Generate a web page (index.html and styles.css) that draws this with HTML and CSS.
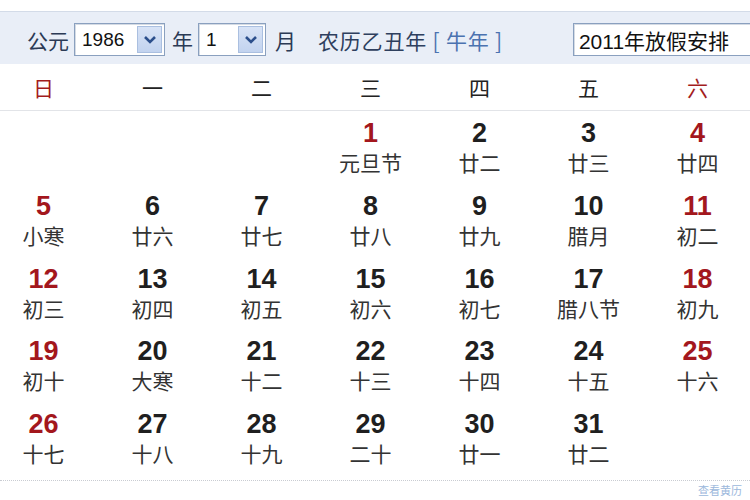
FILE: index.html
```html
<!DOCTYPE html>
<html lang="zh-CN">
<head>
<meta charset="utf-8">
<title>万年历 1986年1月</title>
<link rel="stylesheet" href="styles.css">
</head>
<body>
<div class="page">
  <div class="topbar">
    <span class="lbl">公元</span>
    <div class="sel sel-year">
      <span class="val">1986</span>
      <span class="btn"><svg width="14" height="10" viewBox="0 0 14 10"><path d="M2 2 L7 7 L12 2" fill="none" stroke="#2c4f8c" stroke-width="2.6"/></svg></span>
    </div>
    <span class="lbl lbl-y">年</span>
    <div class="sel sel-month">
      <span class="val">1</span>
      <span class="btn"><svg width="14" height="10" viewBox="0 0 14 10"><path d="M2 2 L7 7 L12 2" fill="none" stroke="#2c4f8c" stroke-width="2.6"/></svg></span>
    </div>
    <span class="lbl lbl-m">月</span>
    <span class="lunar">农历乙丑年 <span class="zodiac">[ 牛年 ]</span></span>
    <div class="sel sel-holiday"><span class="val">2011年放假安排</span></div>
  </div>

  <div class="weekdays">
    <div class="wd red">日</div>
    <div class="wd">一</div>
    <div class="wd">二</div>
    <div class="wd">三</div>
    <div class="wd">四</div>
    <div class="wd">五</div>
    <div class="wd red">六</div>
  </div>

  <div class="grid">
    <div class="cell"></div>
    <div class="cell"></div>
    <div class="cell"></div>
    <div class="cell red"><div class="num">1</div><div class="lu">元旦节</div></div>
    <div class="cell"><div class="num">2</div><div class="lu">廿二</div></div>
    <div class="cell"><div class="num">3</div><div class="lu">廿三</div></div>
    <div class="cell red"><div class="num">4</div><div class="lu">廿四</div></div>

    <div class="cell red"><div class="num">5</div><div class="lu">小寒</div></div>
    <div class="cell"><div class="num">6</div><div class="lu">廿六</div></div>
    <div class="cell"><div class="num">7</div><div class="lu">廿七</div></div>
    <div class="cell"><div class="num">8</div><div class="lu">廿八</div></div>
    <div class="cell"><div class="num">9</div><div class="lu">廿九</div></div>
    <div class="cell"><div class="num">10</div><div class="lu">腊月</div></div>
    <div class="cell red"><div class="num">11</div><div class="lu">初二</div></div>

    <div class="cell red"><div class="num">12</div><div class="lu">初三</div></div>
    <div class="cell"><div class="num">13</div><div class="lu">初四</div></div>
    <div class="cell"><div class="num">14</div><div class="lu">初五</div></div>
    <div class="cell"><div class="num">15</div><div class="lu">初六</div></div>
    <div class="cell"><div class="num">16</div><div class="lu">初七</div></div>
    <div class="cell"><div class="num">17</div><div class="lu">腊八节</div></div>
    <div class="cell red"><div class="num">18</div><div class="lu">初九</div></div>

    <div class="cell red"><div class="num">19</div><div class="lu">初十</div></div>
    <div class="cell"><div class="num">20</div><div class="lu">大寒</div></div>
    <div class="cell"><div class="num">21</div><div class="lu">十二</div></div>
    <div class="cell"><div class="num">22</div><div class="lu">十三</div></div>
    <div class="cell"><div class="num">23</div><div class="lu">十四</div></div>
    <div class="cell"><div class="num">24</div><div class="lu">十五</div></div>
    <div class="cell red"><div class="num">25</div><div class="lu">十六</div></div>

    <div class="cell red"><div class="num">26</div><div class="lu">十七</div></div>
    <div class="cell"><div class="num">27</div><div class="lu">十八</div></div>
    <div class="cell"><div class="num">28</div><div class="lu">十九</div></div>
    <div class="cell"><div class="num">29</div><div class="lu">二十</div></div>
    <div class="cell"><div class="num">30</div><div class="lu">廿一</div></div>
    <div class="cell"><div class="num">31</div><div class="lu">廿二</div></div>
    <div class="cell"></div>
  </div>

  <div class="footer">
    <span class="more">查看黄历</span>
  </div>
</div>
</body>
</html>
```

FILE: styles.css
```css
html, body {
  margin: 0;
  padding: 0;
  background: #ffffff;
  overflow: hidden;
}

.page {
  width: 750px;
  height: 500px;
  overflow: hidden;
  font-family: "Noto Sans CJK SC", "Liberation Sans", sans-serif;
  color: #333;
}

.topbar {
  box-sizing: border-box;
  margin-top: 11px;
  height: 53px;
  padding-top: 3px;
  border-top: 1px solid #d3dbe8;
  background: #e9eef7;
  display: flex;
  align-items: center;
  padding-left: 27px;
  white-space: nowrap;
  overflow: hidden;
}

.topbar > * {
  flex-shrink: 0;
}

.lbl {
  font-size: 21px;
  line-height: 24px;
  color: #2b3a55;
}

.lbl-y { margin-left: 7px; }
.lbl-m { margin-left: 9px; }

.sel {
  box-sizing: border-box;
  height: 33px;
  border: 1px solid #8aa0bf;
  background: #ffffff;
  display: flex;
  align-items: center;
  padding: 0 2px 0 7px;
  box-shadow: inset 1px 1px 0 #d5dbe4;
}

.sel .val {
  flex: 1;
  font-family: "Liberation Sans", "Noto Sans CJK SC", sans-serif;
  font-size: 19px;
  color: #111;
}

.sel .btn {
  width: 25px;
  height: 27px;
  box-sizing: border-box;
  border: 1px solid #aabfe0;
  background: linear-gradient(#d8e3f6, #c2d3ef);
  display: flex;
  align-items: center;
  justify-content: center;
}

.sel-year {
  width: 91px;
  margin-left: 5px;
}

.sel-month {
  width: 68px;
  margin-left: 5px;
}

.lunar {
  margin-left: 22px;
  font-size: 21px;
  letter-spacing: 0.8px;
  color: #2e3f5e;
}

.zodiac {
  color: #4b72b0;
}

.sel-holiday {
  margin-left: 70px;
  width: 190px;
  padding-left: 5px;
}

.sel-holiday .val {
  font-family: "Liberation Sans", "Noto Sans CJK SC", sans-serif;
  font-size: 21px;
  color: #111;
}

.weekdays {
  display: grid;
  grid-template-columns: repeat(7, 109px);
  margin-left: -11px;
  height: 46px;
  border-bottom: 1px solid #e2e4e8;
  align-items: center;
}

.wd {
  text-align: center;
  font-size: 21px;
  color: #222;
}

.wd.red { color: #a31d1d; }

.grid {
  display: grid;
  grid-template-columns: repeat(7, 109px);
  grid-auto-rows: 72.75px;
  margin-left: -11px;
}

.cell {
  text-align: center;
  padding-top: 8px;
  box-sizing: border-box;
}

.num {
  font-family: "Liberation Sans", "Arial", sans-serif;
  font-weight: bold;
  font-size: 27px;
  line-height: 28px;
  color: #1f1f1f;
}

.cell.red .num { color: #a3171d; }

.lu {
  font-size: 21px;
  line-height: 30px;
  color: #333;
}

.footer {
  margin-top: 5px;
  height: 15px;
  border-top: 1px dotted #c9ccd2;
  display: flex;
  justify-content: flex-end;
  align-items: flex-end;
}

.more {
  font-size: 11px;
  line-height: 12px;
  color: #9cb8dc;
  margin-right: 8px;
}
```
